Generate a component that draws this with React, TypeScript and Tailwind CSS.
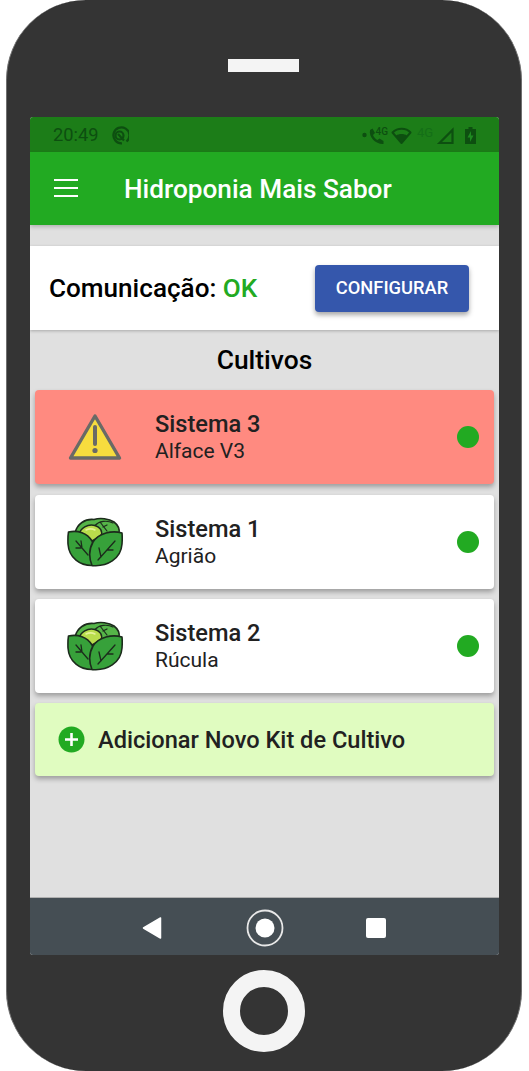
const font = { fontFamily: 'Roboto, "Liberation Sans", sans-serif' };

function Cabbage() {
  return (
    <svg width="56" height="50" viewBox="0 0 56 50">
      <path d="M8 16C10 7 18 1.500 27 2.500C33 0.500 42 1.500 47 5C51 8 53 12 52 17L30 30Z" fill="#55b548" stroke="#1c2b1c" strokeWidth="1.600" strokeLinejoin="round" />
      <path d="M12 18C13 11 21 6.500 28 8.500C33 10 36 14 34 19L25 24Z" fill="#b9dd4c" stroke="#1c2b1c" strokeWidth="1.500" strokeLinejoin="round" />
      <path d="M19 13C22 11.500 25 11.500 28 13" fill="none" stroke="#e4f29a" strokeWidth="1.500" strokeLinecap="round" />
      <path d="M33 5L40 14M40 8L36 10M28 8.500C32 4 40 3 46 6" fill="none" stroke="#1c2b1c" strokeWidth="1.200" strokeLinecap="round" />
      <path d="M1.500 15C11 13 20 16 25 24C28 30 29 39 26 48.500C13 49 2 41 1 27C0.800 22 1 18 1.500 15Z" fill="#37a13a" stroke="#1c2b1c" strokeWidth="1.600" strokeLinejoin="round" />
      <path d="M55 16C45 13 32 16 26 25C22 32 22 41 25 48.500C40 50 54 42 55 27C55.300 23 55.300 19 55 16Z" fill="#37a13a" stroke="#1c2b1c" strokeWidth="1.600" strokeLinejoin="round" />
      <path d="M9 24L21 38M9 31L14 31M14 24L15 31" fill="none" stroke="#1c2b1c" strokeWidth="1.300" strokeLinecap="round" />
      <path d="M48 24L31 43M32 31L34 40M46 33L40 33" fill="none" stroke="#1c2b1c" strokeWidth="1.300" strokeLinecap="round" />
    </svg>
  );
}

function Warning() {
  return (
    <svg width="54" height="48" viewBox="0 0 54 48">
      <path d="M27 3L51.500 45H2.500Z" fill="#f7dc3e" stroke="#6a6a66" strokeWidth="3.400" strokeLinejoin="round" />
      <path d="M27 14V31" stroke="#6a6a66" strokeWidth="4" strokeLinecap="round" />
      <circle cx="27" cy="37.500" r="2.600" fill="#6a6a66" />
    </svg>
  );
}

function StatusIcons() {
  return (
    <svg width="120" height="35" viewBox="0 0 120 35" fill="#0d4f10">
      <circle cx="4.500" cy="18" r="2.200" />
      <path d="M10 13L12.500 11.500L15 16L13 18C14 20.500 15.500 22 17.500 23L19.500 21.500L23.500 24V27C16 27.500 8.500 20.500 10 13Z" />
      <text x="15.500" y="18" fontSize="10" fontWeight="500" fontFamily="Roboto, sans-serif">4G</text>
      <path d="M32.500 15.500C37.500 10.500 46 10.500 50.500 15.500L41.500 26Z" fill="none" stroke="#0d4f10" strokeWidth="2" strokeLinejoin="round" />
      <path d="M36 18.500C39 16.500 44 16.500 47 18.500L41.500 25.500Z" />
      <text x="57" y="20" fontSize="13" fontFamily="Roboto, sans-serif" fill="#146f17">4G</text>
      <path d="M79.500 26L92.500 13V26Z" fill="none" stroke="#0d4f10" strokeWidth="2.200" />
      <path d="M108.500 12V10H112.500V12H116V27H105V12Z" />
      <path d="M111 14L107.500 20.500H110V25L113.500 18.500H111Z" fill="#1e8a20" />
    </svg>
  );
}

function Card({ title, subtitle, alert, icon }: { title: string; subtitle: string; alert?: boolean; icon: React.ReactNode }) {
  return (
    <div className={`${alert ? 'bg-[#ff8a80]' : 'bg-white'} h-[94px] mb-[10.300px] rounded-[4px] shadow-[0_3px_5px_rgba(0,0,0,0.3)] flex items-center pl-[32px] pr-[15px]`}>
      <div className="w-[56px] flex justify-center">{icon}</div>
      <div className="ml-[32px] flex-1 mt-[-1px]">
        <div className="text-[23.600px] leading-[29px] font-medium text-[#212121]">{title}</div>
        <div className="text-[21px] leading-[24px] text-[#212121]">{subtitle}</div>
      </div>
      <span className="w-[22px] h-[22px] rounded-full bg-[#22aa22]" />
    </div>
  );
}

export default function App() {
  return (
    <div className="w-[529px] h-[1071px] bg-white overflow-hidden" style={font}>
      <div className="ml-[6px] w-[516px] h-[1071px] bg-[#343434] rounded-[80px] border-x border-[#6f6f6f] flex flex-col items-center">
        {/* Speaker */}
        <div className="mt-[59px] w-[71px] h-[13px] bg-[#f4f4f4] ml-[-1px]" />

        {/* Screen */}
        <div className="mt-[45px] w-[469px] h-[838px] bg-[#e0e0e0] rounded-[3px] overflow-hidden flex flex-col ml-[1px]">
          <div className="h-[35px] bg-[#1c7d18] flex items-center pl-[23px] pr-[19px] shrink-0">
            <span className="text-[18.300px] text-[#0d4f10] mt-[1px]">20:49</span>
            <svg className="ml-[11px] mt-[1px]" width="19" height="19" viewBox="0 0 19 19" fill="none" stroke="#0d4f10" strokeWidth="2.200">
              <path d="M16.500 15.500A8 8 0 1 0 12 17.300" />
              <circle cx="9.500" cy="9.500" r="4" />
              <path d="M8 8L14 14.500" />
            </svg>
            <div className="ml-auto">
              <StatusIcons />
            </div>
          </div>

          <div className="h-[73px] bg-[#22aa22] flex items-center pl-[24px] shadow-[0_2px_4px_rgba(0,0,0,0.2)] z-10 shrink-0">
            <div className="w-[24px] flex flex-col gap-[5.500px] mt-[-1px]">
              <div className="h-[2.500px] bg-white" />
              <div className="h-[2.500px] bg-white" />
              <div className="h-[2.500px] bg-white" />
            </div>
            <h1 className="ml-[46px] text-white text-[26.200px] font-medium leading-none mt-[2px]">Hidroponia Mais Sabor</h1>
          </div>

          <div className="mt-[21px] h-[84px] bg-white shrink-0 flex items-center pl-[19px] pr-[30px] shadow-[0_1px_3px_rgba(0,0,0,0.25)]">
            <span className="text-[26.100px] font-medium text-black mt-[2px]">
              Comunicação: <span className="text-[#22aa22]">OK</span>
            </span>
            <button className="ml-auto w-[154px] h-[47px] rounded-[4px] bg-[#3557ac] text-white text-[18.300px] font-medium shadow-[0_3px_5px_rgba(0,0,0,0.35)]">
              CONFIGURAR
            </button>
          </div>

          <h2 className="text-center text-[26.400px] font-medium text-black leading-[30px] mt-[15px]">Cultivos</h2>

          <div className="mt-[15.400px] px-[5px]">
            <Card title="Sistema 3" subtitle="Alface V3" alert icon={<Warning />} />
            <Card title="Sistema 1" subtitle="Agrião" icon={<Cabbage />} />
            <Card title="Sistema 2" subtitle="Rúcula" icon={<Cabbage />} />
            <div className="h-[73px] bg-[#e0fcc0] rounded-[4px] shadow-[0_3px_5px_rgba(0,0,0,0.3)] flex items-center pl-[23px]">
              <svg width="27" height="27" viewBox="0 0 27 27">
                <circle cx="13.500" cy="13.500" r="13" fill="#22aa22" />
                <path d="M13.500 7V20M7 13.500H20" stroke="#fff" strokeWidth="2.600" />
              </svg>
              <span className="ml-[13px] text-[23.600px] font-medium text-[#212121] mt-[2px]">Adicionar Novo Kit de Cultivo</span>
            </div>
          </div>

          <div className="mt-auto h-[58px] bg-[#454e54] border-t border-[#b0b0b0] shrink-0 flex items-center pt-[3px]">
            <svg className="ml-[112px]" width="20" height="24" viewBox="0 0 20 24">
              <path d="M18.500 2V22L1.500 12Z" fill="#fff" stroke="#fff" strokeWidth="1.500" strokeLinejoin="round" />
            </svg>
            <svg className="ml-[84px]" width="38" height="38" viewBox="0 0 38 38">
              <circle cx="19" cy="19" r="17.500" fill="none" stroke="#e8e8e8" strokeWidth="1.800" />
              <circle cx="19" cy="19" r="9.500" fill="#fff" />
            </svg>
            <div className="ml-[82px] w-[20px] h-[20px] bg-white rounded-[2px]" />
          </div>
        </div>

        {/* Home button */}
        <div className="mt-[15px] w-[82px] h-[82px] rounded-full border-[17px] border-[#f4f4f4] ml-[-1px]" />
      </div>
    </div>
  );
}
